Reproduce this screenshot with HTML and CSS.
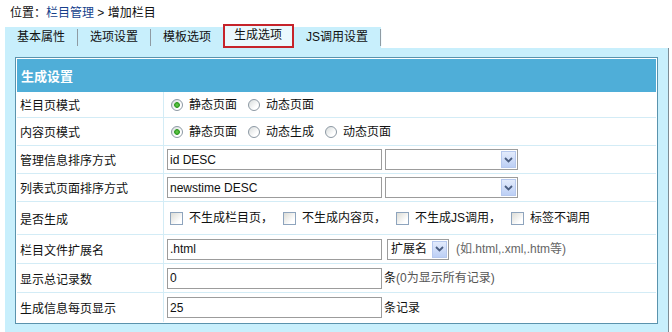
FILE: index.html
```html
<!DOCTYPE html>
<html lang="zh-CN">
<head>
    <meta charset="UTF-8">
    <title>增加栏目</title>
    <link rel="stylesheet" href="styles.css">
</head>
<body>
    <div class="crumb">位置：<a href="#">栏目管理</a> &gt; 增加栏目</div>

    <div class="tabs">
        <span class="tab"><span>基本属性</span></span>
        <span class="tab"><span>选项设置</span></span>
        <span class="tab before-active"><span>模板选项</span></span>
        <span class="tab active"><span>生成选项</span></span>
        <span class="tab"><span>JS调用设置</span></span>
    </div>

    <div class="panel">
        <table class="form">
            <tr class="r-head"><td colspan="2" class="header">生成设置</td></tr>
            <tr class="r1">
                <td class="label">栏目页模式</td>
                <td class="value">
                    <label class="opt first"><input type="radio" name="listdt" checked>静态页面</label><label class="opt"><input type="radio" name="listdt">动态页面</label>
                </td>
            </tr>
            <tr class="r2">
                <td class="label">内容页模式</td>
                <td class="value">
                    <label class="opt first"><input type="radio" name="showdt" checked>静态页面</label><label class="opt"><input type="radio" name="showdt">动态生成</label><label class="opt"><input type="radio" name="showdt">动态页面</label>
                </td>
            </tr>
            <tr class="r3">
                <td class="label">管理信息排序方式</td>
                <td class="value">
                    <input class="text" type="text" value="id DESC"><span class="sel wide"><select><option></option></select><span class="arrow"><svg width="9" height="6" viewBox="0 0 9 6"><path d="M1 1l3.5 3.5L8 1" fill="none" stroke="#4a5d80" stroke-width="1.8"/></svg></span></span>
                </td>
            </tr>
            <tr class="r4">
                <td class="label">列表式页面排序方式</td>
                <td class="value">
                    <input class="text" type="text" value="newstime DESC"><span class="sel wide"><select><option></option></select><span class="arrow"><svg width="9" height="6" viewBox="0 0 9 6"><path d="M1 1l3.5 3.5L8 1" fill="none" stroke="#4a5d80" stroke-width="1.8"/></svg></span></span>
                </td>
            </tr>
            <tr class="r5">
                <td class="label">是否生成</td>
                <td class="value">
                    <label class="chk first"><input type="checkbox">不生成栏目页，</label><label class="chk"><input type="checkbox">不生成内容页，</label><label class="chk"><input type="checkbox">不生成JS调用，</label><label class="chk"><input type="checkbox">标签不调用</label>
                </td>
            </tr>
            <tr class="r6">
                <td class="label">栏目文件扩展名</td>
                <td class="value">
                    <input class="text" type="text" value=".html"><span class="sel small"><select><option>扩展名</option></select><span class="arrow"><svg width="9" height="6" viewBox="0 0 9 6"><path d="M1 1l3.5 3.5L8 1" fill="none" stroke="#4a5d80" stroke-width="1.8"/></svg></span></span><span class="hint">(如.html,.xml,.htm等)</span>
                </td>
            </tr>
            <tr class="r7">
                <td class="label">显示总记录数</td>
                <td class="value">
                    <input class="text" type="text" value="0"><span class="unit">条<span class="gray">(0为显示所有记录)</span></span>
                </td>
            </tr>
            <tr class="r8 last">
                <td class="label">生成信息每页显示</td>
                <td class="value">
                    <input class="text" type="text" value="25"><span class="unit">条记录</span>
                </td>
            </tr>
        </table>
    </div>
</body>
</html>
```

FILE: styles.css
```css
body {
    margin: 0;
    font-family: "Liberation Sans", "Noto Sans CJK SC", sans-serif;
    font-size: 12px;
    color: #111;
    background: #fff;
}
.crumb {
    height: 24px;
    line-height: 26px;
    padding-left: 10px;
}
.crumb a {
    color: #163f8c;
    text-decoration: none;
}
.tabs {
    display: flex;
    align-items: flex-end;
    margin-left: 5px;
    height: 24px;
}
.tab {
    background: #c8effc;
    height: 21px;
    padding: 2px 0;
    box-sizing: border-box;
}
.tab span {
    display: block;
    line-height: 17px;
    padding: 0 12px;
    border-right: 1px solid #8f9ba3;
    box-shadow: 1px 0 0 #f2fbff;
}
.tab.before-active span {
    border-right: none;
    box-shadow: none;
}
.tab.active {
    height: 24px;
    padding: 0;
    border: 2px solid #c6232a;
    background: #eaf8fd;
}
.tab.active span {
    line-height: 19px;
    padding: 0 10px 0 9px;
    border-right: none;
    box-shadow: none;
}
.panel {
    margin: 0 3px 0 5px;
    padding: 9px 10px 12px;
    background: #c8effc;
    border-right: 1px solid #7d8c95;
}
.form {
    width: 100%;
    border-collapse: separate;
    border-spacing: 0;
    border: 1px solid #5a93ad;
    padding: 1px;
    background: #fff;
}
.form td {
    padding: 0;
    vertical-align: middle;
    border-bottom: 1px solid #d3ecf6;
}
.form tr.last td {
    border-bottom: none;
}
.form td.header {
    height: 33px;
    padding-left: 4px;
    background: #4faed8;
    color: #fff;
    font-weight: bold;
    font-size: 13px;
    border-bottom: none;
}
.form td.label {
    width: 143px;
    padding-left: 3px;
    border-right: 1px solid #d3ecf6;
}
.form td.value {
    padding-left: 3px;
    white-space: nowrap;
    line-height: 16px;
}
.r1 td { height: 25px; }
.r2 td, .r3 td, .r4 td { height: 27px; }
.r5 td { height: 32px; }
.r6 td { height: 28px; }
.r7 td { height: 28px; }
.r8 td { height: 29px; }

.value > * {
    vertical-align: middle;
}
.opt, .chk {
    display: inline-flex;
    align-items: center;
}
.opt input {
    appearance: none;
    width: 12px;
    height: 12px;
    margin: 0 6px 0 11px;
    border: 1px solid #8c98a3;
    border-radius: 50%;
    background: linear-gradient(135deg, #d8dcdc, #ffffff 70%);
    box-sizing: border-box;
}
.opt.first input {
    margin-left: 4px;
}
.opt input:checked {
    background: radial-gradient(circle, #6fd14f 0, #2d9a22 2.5px, transparent 3.2px), linear-gradient(135deg, #d8dcdc, #ffffff 70%);
}
.chk input {
    appearance: none;
    width: 13px;
    height: 13px;
    margin: 0 6px 0 10px;
    border: 1px solid #8ea4bd;
    background: linear-gradient(135deg, #dcdcd6, #ffffff 75%);
    box-sizing: border-box;
}
.chk.first input {
    margin-left: 3px;
}
input.text {
    width: 215px;
    height: 21px;
    box-sizing: border-box;
    margin: 0;
    padding: 0 2px;
    border: 1px solid #9c9c9c;
    font-family: "Liberation Sans", sans-serif;
    font-size: 12px;
    color: #111;
}
.sel {
    position: relative;
    display: inline-block;
    margin-left: 3px;
    height: 21px;
}
.sel select {
    display: block;
    appearance: none;
    height: 21px;
    margin: 0;
    padding: 0 3px;
    border: 1px solid #9c9c9c;
    background: #fff;
    font-family: "Liberation Sans", "Noto Sans CJK SC", sans-serif;
    font-size: 12px;
    color: #111;
}
.sel.wide select {
    width: 133px;
}
.sel.small {
    margin-left: 5px;
}
.sel.small select {
    width: 62px;
}
.sel .arrow {
    position: absolute;
    right: 2px;
    top: 2px;
    width: 15px;
    height: 17px;
    box-sizing: border-box;
    border: 1px solid #b6c8ee;
    background: linear-gradient(#e3ebfc, #bccff5);
    display: flex;
    align-items: center;
    justify-content: center;
}
.hint {
    margin-left: 7px;
    color: #666;
}
.unit {
    margin-left: 2px;
}
.unit .gray {
    color: #555;
}
```
